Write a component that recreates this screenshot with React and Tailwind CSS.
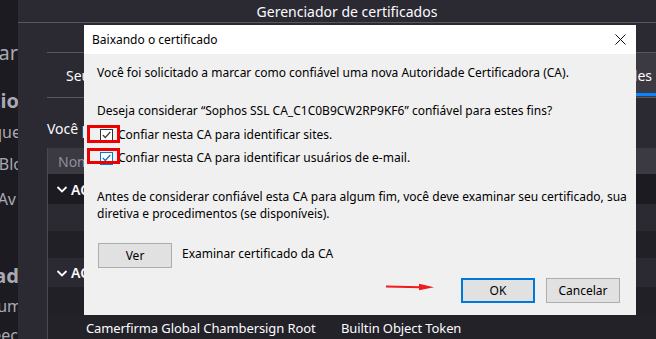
export default function App() {
  const sideLines = [
    { t: "Gerenciar", cls: "mt-[41px] text-[20px] h-[24px]" },
    { t: "Início", cls: "mt-[24px] text-[20px] font-bold h-[24px] -mr-[1px]" },
    { t: "Bloque", cls: "mt-[9px] text-[16px] h-[20px] -mr-[3px]" },
    { t: "Blo", cls: "mt-[12px] text-[16px] h-[20px] -mr-[5px]" },
    { t: "Av", cls: "mt-[15px] text-[16px] h-[20px] mr-[2px]" },
    { t: "Segurad", cls: "mt-[55px] text-[20px] font-bold h-[24px] -mr-[1px]" },
    { t: "Algum", cls: "mt-[8px] text-[16px] h-[20px] -mr-[4px]" },
    { t: "Deeci", cls: "mt-[9px] text-[16px] h-[20px] -mr-[4px]" },
  ];

  const rows = [
    { bg: "bg-[#1c1b22]", h: "h-[30px]", text: "AC Camerfirma S.A.", chevron: true },
    { bg: "bg-[#2b2a33]", h: "h-[27px]", text: "" },
    { bg: "bg-[#202026]", h: "h-[27px]", text: "" },
    { bg: "bg-[#2b2a33]", h: "h-[29px]", text: "ACCV", chevron: true },
    { bg: "bg-[#202026]", h: "h-[28px]", text: "" },
  ];

  return (
    <div
      className="relative flex w-[656px] h-[339px] overflow-hidden bg-[#2b2a33]"
      style={{ fontFamily: "'Noto Sans', 'Open Sans', sans-serif" }}
    >
      {/* page sidebar, mostly hidden behind the manager */}
      <div className="w-[18px] shrink-0 h-full bg-[#1c1b22] overflow-hidden text-[#a9a9b1] leading-none">
        {sideLines.map((l, i) => (
          <div key={i} className={`flex justify-end items-center whitespace-nowrap ${l.cls}`}>
            <span className="shrink-0">{l.t}</span>
          </div>
        ))}
      </div>

      {/* certificate manager */}
      <div className="flex-1 min-w-0 flex flex-col text-[#fbfbfe]">
        <div className="h-[23px] shrink-0 flex items-center justify-center pl-[20px] border-b border-[#58575e] bg-[#2b2a33] text-[14px]">
          Gerenciador de certificados
        </div>

        <div className="flex-1 flex flex-col pl-[29px] bg-[#2b2a33]">
          <div className="mt-[29px] h-[46px] shrink-0 flex items-stretch justify-between border-t border-b border-[#58575e] text-[14px]">
            <div className="flex items-center pl-[19px]">Seus certificados</div>
            <div className="relative flex items-center pl-[4px] bg-[#3b3a42] -mr-[70px] pr-[74px]">
              Autoridades
              <div className="absolute left-0 right-0 bottom-[1px] h-[3px] bg-[#0a84ff]" />
            </div>
          </div>

          <div className="mt-[20px] text-[14px] whitespace-nowrap">
            Você possui certificados registrados que identificam estas autoridades certificadoras
          </div>

          <div className="mt-[9px] flex-1 flex flex-col border-l border-[#4a4950]">
            <div className="h-[26px] shrink-0 flex items-center pl-[10px] bg-[#3b3a42] text-[14px] text-[#8f8f9d]">
              Nome do certificado
            </div>
            {rows.map((r, i) => (
              <div
                key={i}
                className={`${r.h} ${r.bg} shrink-0 flex items-center pl-[8px] text-[14px] font-semibold`}
              >
                {r.chevron && (
                  <svg width="12" height="12" viewBox="0 0 12 12" className="mr-[3px]">
                    <path d="M1.5 4 L6 8.5 L10.5 4" fill="none" stroke="#fbfbfe" strokeWidth="1.8" />
                  </svg>
                )}
                {r.text}
              </div>
            ))}
            <div className="flex-1 flex items-center pt-[3px] bg-[#232229] text-[13px] whitespace-nowrap tracking-[-0.1px]">
              <span className="shrink-0 pl-[38px] w-[293px]">Camerfirma Global Chambersign Root</span>
              <span className="shrink-0">Builtin Object Token</span>
            </div>
          </div>
        </div>
      </div>

      {/* download dialog */}
      <div
        className="absolute left-[84px] top-[25px] w-[552px] h-[290px] bg-[#f0f0f0] flex flex-col text-[12px] text-black"
        style={{ fontFamily: "'Noto Sans', 'Open Sans', sans-serif" }}
      >
        <div className="h-[29px] shrink-0 bg-white flex items-center justify-between pl-[8px] pr-[10px]">
          <span>Baixando o certificado</span>
          <svg width="11" height="11" viewBox="0 0 11 11">
            <path d="M0.5 0.5 L10.5 10.5 M10.5 0.5 L0.5 10.5" stroke="#111" strokeWidth="1" />
          </svg>
        </div>

        <div className="flex-1 flex flex-col pl-[13px] pr-[13px] whitespace-nowrap">
          <div className="mt-[11px] leading-[16px]">
            Você foi solicitado a marcar como confiável uma nova Autoridade Certificadora (CA).
          </div>
          <div className="mt-[22px] leading-[16px]">
            Deseja considerar “Sophos SSL CA_C1C0B9CW2RP9KF6” confiável para estes fins?
          </div>

          <div className="mt-[8px] flex items-center h-[16px] pl-[3px]">
            <div className="w-[13px] h-[13px] border border-[#333] bg-white flex items-center justify-center">
              <svg width="9" height="8" viewBox="0 0 9 8">
                <path d="M0.8 4 L3.3 6.5 L8.3 1" fill="none" stroke="#444" strokeWidth="1.3" />
              </svg>
            </div>
            <span className="ml-[5px]">Confiar nesta CA para identificar sites.</span>
          </div>
          <div className="mt-[7px] flex items-center h-[16px] pl-[3px]">
            <div className="w-[13px] h-[13px] border border-[#0078d7] bg-white flex items-center justify-center">
              <svg width="9" height="8" viewBox="0 0 9 8">
                <path d="M0.8 4 L3.3 6.5 L8.3 1" fill="none" stroke="#0078d7" strokeWidth="1.3" />
              </svg>
            </div>
            <span className="ml-[5px]">Confiar nesta CA para identificar usuários de e-mail.</span>
          </div>

          <div className="mt-[22px] leading-[17px]">
            Antes de considerar confiável esta CA para algum fim, você deve examinar seu certificado, sua
            <br />
            diretiva e procedimentos (se disponíveis).
          </div>

          <div className="mt-[21px] flex items-start">
            <button className="ml-[1px] w-[74px] h-[25px] bg-[#e1e1e1] border border-[#adadad] text-[12px]">
              Ver
            </button>
            <span className="ml-[10px] mt-[2px]">Examinar certificado da CA</span>
          </div>

          <div className="mt-[10px] flex items-center justify-end pr-[3px]">
            <svg width="48" height="8" viewBox="0 0 48 8" className="mr-[27px] -mt-[7px]">
              <path d="M0 3.5 L34 4.3" stroke="#ee1c1c" strokeWidth="2" />
              <path d="M33 0.8 L48 4.3 L33 7.2 Z" fill="#ee1c1c" />
            </svg>
            <button className="w-[74px] h-[25px] bg-[#e1e1e1] border-2 border-[#0078d7] text-[12px]">
              OK
            </button>
            <button className="ml-[11px] w-[74px] h-[25px] bg-[#e1e1e1] border border-[#adadad] text-[12px]">
              Cancelar
            </button>
          </div>
        </div>

        {/* red highlight annotations */}
        <div className="absolute left-[3px] top-[100px] w-[33px] h-[18px] border-[3px] border-[#ee0000]" />
        <div className="absolute left-[3px] top-[123px] w-[33px] h-[16px] border-[3px] border-[#ee0000]" />
      </div>
    </div>
  );
}
